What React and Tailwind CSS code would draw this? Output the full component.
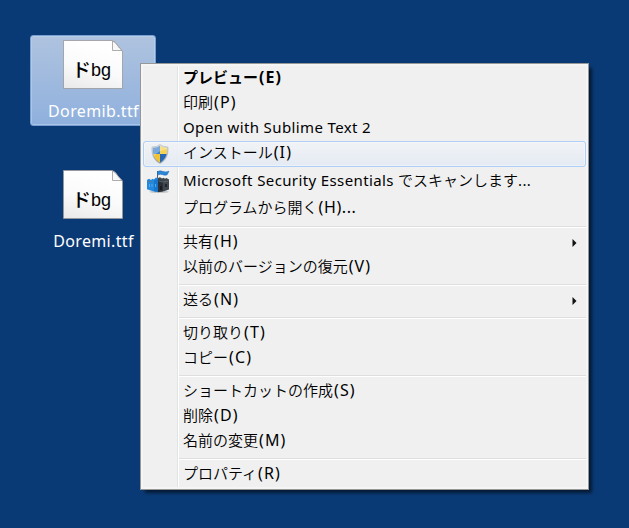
const menuItems = [
  { label: 'プレビュー', suffix: '(E)', bold: true },
  { label: '印刷', suffix: '(P)' },
  { prefix: 'Open with Sublime Text 2' },
  { label: 'インストール', suffix: '(I)', icon: 'shield', selected: true, height: 'h-[26px]' },
  { prefix: 'Microsoft Security Essentials ', label: 'でスキャンします', suffix: '...', icon: 'castle', height: 'h-7' },
  { label: 'プログラムから開く', suffix: '(H)...', height: 'h-[27px]' },
  null,
  { label: '共有', suffix: '(H)', submenu: true },
  { label: '以前のバージョンの復元', suffix: '(V)' },
  null,
  { label: '送る', suffix: '(N)', submenu: true },
  null,
  { label: '切り取り', suffix: '(T)' },
  { label: 'コピー', suffix: '(C)' },
  null,
  { label: 'ショートカットの作成', suffix: '(S)' },
  { label: '削除', suffix: '(D)' },
  { label: '名前の変更', suffix: '(M)' },
  null,
  { label: 'プロパティ', suffix: '(R)' },
];

function ShieldIcon() {
  return (
    <svg width="18" height="20" viewBox="0 0 18 20">
      <defs>
        <clipPath id="shield">
          <path d="M9 1.8Q12 4 16 4C16.4 10.5 14.5 15.5 9 18.4C3.500 15.5 1.600 10.5 2 4Q6 4 9 1.8Z" />
        </clipPath>
        <linearGradient id="rim" x2="0" y2="1">
          <stop stopColor="#dfe4e8" />
          <stop offset="1" stopColor="#8c969d" />
        </linearGradient>
      </defs>
      <path d="M9 .5Q12 3 17 3C17.600 11 15 16.500 9 19.500C3 16.500 .4 11 1 3Q6 3 9 .5Z" fill="url(#rim)" stroke="#a3adb3" strokeWidth=".5" />
      <g clipPath="url(#shield)">
        <path fill="#3f83cf" d="M0 0h9v10H0z" />
        <path fill="#f6d354" d="M9 0h9v10H9z" />
        <path fill="#f1c232" d="M0 10h9v10H0z" />
        <path fill="#2867b4" d="M9 10h9v10H9z" />
        <path fill="#fff" opacity=".3" d="M0 0h18v5Q8 6 3 12H0z" />
      </g>
    </svg>
  );
}

function CastleIcon() {
  return (
    <svg width="24" height="24" viewBox="0 0 24 24">
      <ellipse cx="13" cy="21.800" rx="10" ry="1.300" fill="#c4c7c9" />
      <path d="M11.500 1v8" stroke="#56626b" />
      <path d="M11.500 1.500q3-1.300 5.500 0 3 1 6-.3l-1.800 3.500q-2 1-4.200 0-2.500-1-5.500.3z" fill="#2c87d8" stroke="#1765ae" strokeWidth=".5" />
      <path d="M1 10l2-1.300L5 10l1.500-1.200L8 9.500l2-2 2 1v13.500l-5-.8-6-2z" fill="#2389df" />
      <path d="M12 8l2-.8 2 1.300 1.500-.7 1.500 1 1.500-.7L23 9.500v10l-5 1.800-6 .9z" fill="#3f464d" />
      <path d="M8 10l4-1v13l-4-.8z" fill="#1877cd" />
      <path d="M12 10l5 1v10.300l-5 .7z" fill="#2a3036" />
      <path d="M1.500 11.500l5 .500M12.500 11l4.500 1 5.500-1" stroke="#69757e" strokeWidth=".7" fill="none" />
      <path d="M3.500 14v3M6 14v3M9.500 14v3" stroke="#5fb2f0" strokeWidth=".8" />
      <path d="M15 16v4M20 14v3" stroke="#111519" strokeWidth="1.300" />
    </svg>
  );
}

function MenuItem({ item }) {
  return (
    <div className={`relative flex shrink-0 items-center ${item.height || 'h-[25px]'}`}>
      {item.selected && (
        <div className="absolute inset-y-0 left-0.5 right-0.5 rounded-[3px] border border-[#aecff7] bg-linear-to-b from-[#f1f3f6]/90 to-[#e3eaf4]/90 shadow-[inset_0_0_0_1px_rgba(255,255,255,0.35)]" />
      )}
      <div className="relative flex w-[42px] shrink-0 justify-center pr-1">
        {item.icon === 'shield' && <ShieldIcon />}
        {item.icon === 'castle' && <span className="-ml-1 pt-0.5"><CastleIcon /></span>}
      </div>
      <div className={`relative flex grow items-center whitespace-pre leading-[23px] ${item.selected ? 'pb-[3px]' : 'pb-0.5'} ${item.bold ? 'font-bold' : ''}`}>
        {item.prefix && <span className="tracking-[0.38px]">{item.prefix}</span>}
        {item.label && <span className={item.bold ? '' : 'font-[350]'}>{item.label}</span>}
        {item.suffix && (
          <span className={item.suffix === '...' ? 'tracking-[0.3px]' : item.suffix.endsWith('...') ? 'pl-px text-[16px] tracking-[0.6px]' : 'pl-px text-[16px] tracking-[1.1px]'}>
            {item.suffix}
          </span>
        )}
      </div>
      {item.submenu && (
        <svg className="mr-[11px]" width="5" height="8" viewBox="0 0 5 8">
          <path d="M.5 0 4.500 4 .5 8z" fill="#111" />
        </svg>
      )}
    </div>
  );
}

function Separator() {
  return (
    <div className="h-2 shrink-0 pl-[38px] pr-0.5 pt-1">
      <div className="h-0.5 border-b border-t border-b-white border-t-[#dedede]" />
    </div>
  );
}

function FontFile({ name, selected }) {
  return (
    <div
      className={`flex h-[91px] w-[126px] flex-col items-center rounded-[3px] border pt-1 ${
        selected ? 'border-[#789fd2] bg-linear-to-b from-[#afc3df] to-[#8fb0dd] shadow-[inset_0_0_0_1px_rgba(190,211,239,0.55)]' : 'border-transparent'
      }`}
    >
      <div className="relative h-[49px] w-[60px]">
        <svg className="absolute inset-0" width="60" height="49" viewBox="0 0 60 49">
          <defs>
            <linearGradient id="paper" x1=".3" x2="0" y2="1">
              <stop stopColor="#fff" />
              <stop offset=".5" stopColor="#fafafa" />
              <stop offset="1" stopColor="#e9e9e9" />
            </linearGradient>
          </defs>
          <path d="M.5.500H49Q52 1 55 6L59.500 11v37.500H.5z" fill="url(#paper)" stroke="#999" strokeOpacity=".8" />
          <path d="M49.500 1v9.500h9.500Q56 8 54.500 5.500 52.500 2 49.500 1z" fill="#f8f8f8" stroke="#999" strokeWidth=".8" />
        </svg>
        <div className="relative flex pl-[9px] pt-[18px] text-[18px] leading-6 text-black">
          <span className="w-[19px] text-[19px] font-medium">ド</span>
          <span className="font-['Liberation_Sans']">bg</span>
        </div>
      </div>
      <div className="mt-2.5 whitespace-nowrap pl-px text-[16px] leading-6 tracking-[0.35px] text-white">{name}</div>
    </div>
  );
}

export default function App() {
  return (
    <main className="relative h-[528px] w-[629px] overflow-hidden bg-[#0a3a75] font-['Noto_Sans','Noto_Sans_CJK_JP',sans-serif] text-[15px] text-black">
      <div className="flex flex-col gap-[39px] pl-[30px] pt-[35px]">
        <FontFile name="Doremib.ttf" selected />
        <FontFile name="Doremi.ttf" />
      </div>
      <div className="absolute left-[140px] top-[63px] flex h-[427px] w-[449px] flex-col border border-[#979797] bg-[#f0f0f0] py-0.5 shadow-[inset_0_0_0_2px_#f5f5f5,4px_4px_3px_-1px_rgba(0,0,0,0.55)]">
        <div className="absolute bottom-0.5 left-9 top-0.5 w-0.5 border-l border-r border-l-[#e2e3e3] border-r-white" />
        {menuItems.map((item, index) => (item ? <MenuItem key={index} item={item} /> : <Separator key={index} />))}
      </div>
    </main>
  );
}
